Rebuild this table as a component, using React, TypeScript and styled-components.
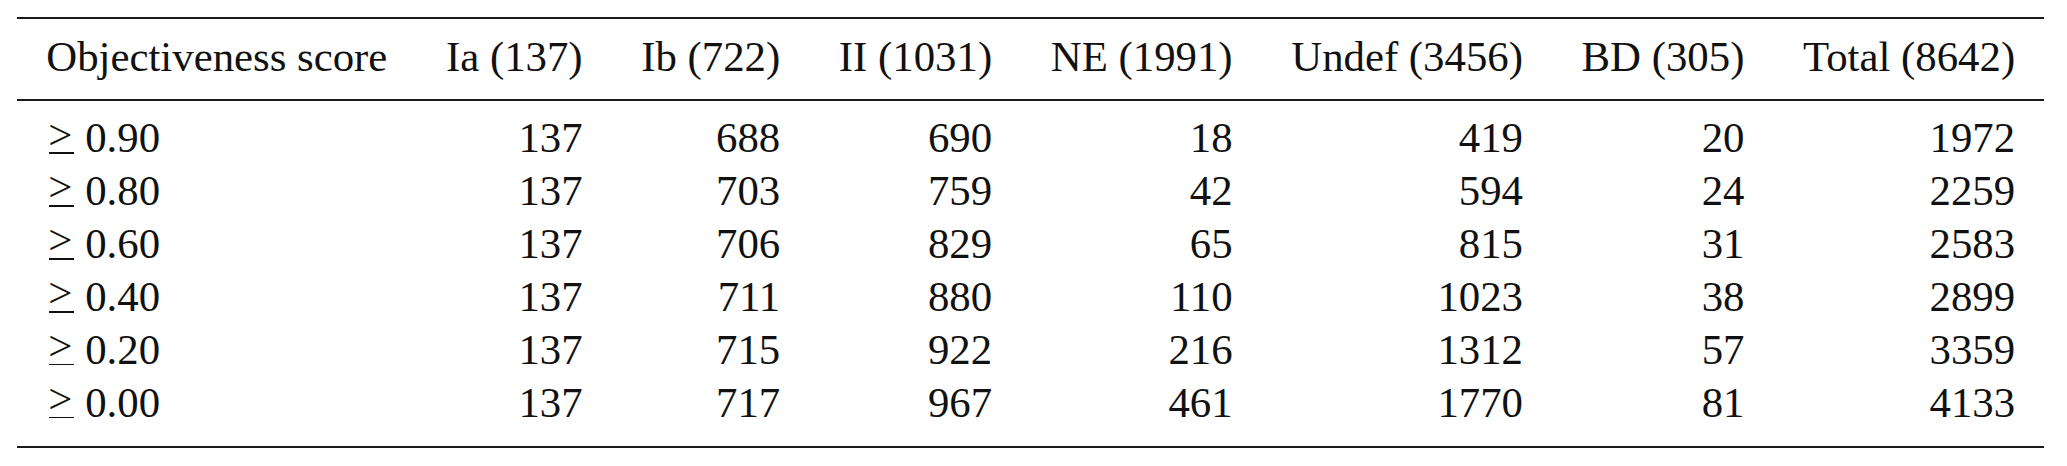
import React from "react";
import styled, { createGlobalStyle } from "styled-components";

const GlobalStyle = createGlobalStyle`
  html, body {
    margin: 0;
    padding: 0;
    background: #ffffff;
  }
  body {
    font-family: "Liberation Serif", "Times New Roman", serif;
    color: #111111;
  }
`;

const Page = styled.div`
  padding: 17px 0 0 17px;
  background: #ffffff;
`;

const Table = styled.table`
  border-collapse: separate;
  border-spacing: 0;
  font-family: "Liberation Serif", "Times New Roman", serif;
  font-size: 42.8px;
  line-height: 52.9px;
  color: #111111;
`;

const HeadCell = styled.th<{ $align: "left" | "right" }>`
  font-weight: normal;
  text-align: ${(p) => p.$align};
  white-space: nowrap;
  padding: 11.8px 29.3px 14.8px;
  border-top: 2px solid #1a1a1a;
  border-bottom: 2px solid #1a1a1a;
`;

const Cell = styled.td<{ $align: "left" | "right"; $first: boolean; $last: boolean }>`
  text-align: ${(p) => p.$align};
  white-space: nowrap;
  padding: ${(p) => (p.$first ? "11.6px" : "0")} 29.3px
    ${(p) => (p.$last ? "16.3px" : "0")};
  border-bottom: ${(p) => (p.$last ? "2px solid #1a1a1a" : "none")};
`;

/* math "greater than or equal" drawn as ">" with a flat bar beneath */
const Geq = styled.span`
  position: relative;
  display: inline-block;
  margin: 0 2px 0 2px;
  &::after {
    content: "";
    position: absolute;
    left: 1px;
    right: -2px;
    bottom: 11.2px;
    height: 1.7px;
    background: #111111;
  }
`;

const GeqMark = styled.span`
  position: relative;
  top: -3.6px;
`;

const headers = [
  "Objectiveness score",
  "Ia (137)",
  "Ib (722)",
  "II (1031)",
  "NE (1991)",
  "Undef (3456)",
  "BD (305)",
  "Total (8642)",
];

const rows: { threshold: string; values: string[] }[] = [
  { threshold: "0.90", values: ["137", "688", "690", "18", "419", "20", "1972"] },
  { threshold: "0.80", values: ["137", "703", "759", "42", "594", "24", "2259"] },
  { threshold: "0.60", values: ["137", "706", "829", "65", "815", "31", "2583"] },
  { threshold: "0.40", values: ["137", "711", "880", "110", "1023", "38", "2899"] },
  { threshold: "0.20", values: ["137", "715", "922", "216", "1312", "57", "3359"] },
  { threshold: "0.00", values: ["137", "717", "967", "461", "1770", "81", "4133"] },
];

export default function App() {
  return (
    <>
      <GlobalStyle />
      <Page>
        <Table>
          <thead>
            <tr>
              {headers.map((h, i) => (
                <HeadCell key={h} $align={i === 0 ? "left" : "right"}>
                  {h}
                </HeadCell>
              ))}
            </tr>
          </thead>
          <tbody>
            {rows.map((r, ri) => {
              const first = ri === 0;
              const last = ri === rows.length - 1;
              return (
                <tr key={r.threshold}>
                  <Cell $align="left" $first={first} $last={last}>
                    <Geq aria-label="≥">
                      <GeqMark>&gt;</GeqMark>
                    </Geq>{" "}
                    {r.threshold}
                  </Cell>
                  {r.values.map((v, ci) => (
                    <Cell key={ci} $align="right" $first={first} $last={last}>
                      {v}
                    </Cell>
                  ))}
                </tr>
              );
            })}
          </tbody>
        </Table>
      </Page>
    </>
  );
}
